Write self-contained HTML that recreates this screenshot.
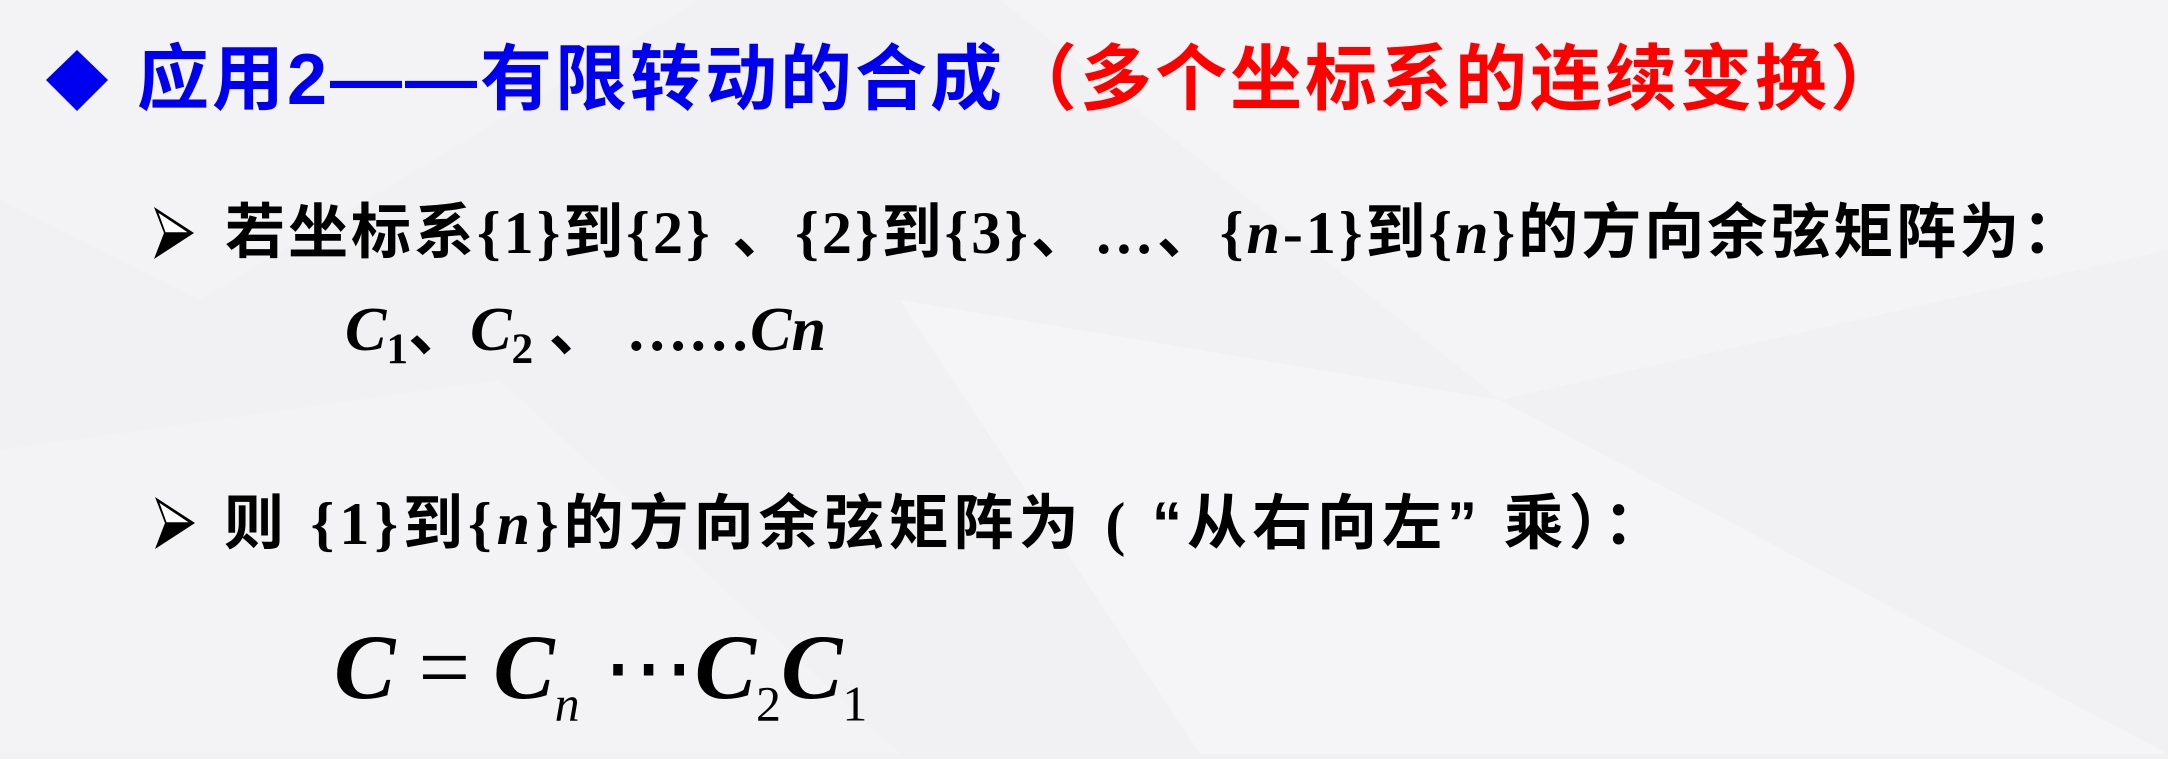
<!DOCTYPE html>
<html><head><meta charset="utf-8">
<style>
html,body{margin:0;padding:0}
body{width:2168px;height:754px;overflow:hidden;position:relative;background:#f1f1f3;font-family:"Liberation Sans","Noto Sans CJK SC",sans-serif}
.bg{position:absolute;left:0;top:0}
.t{position:absolute;white-space:nowrap;font-weight:bold}
.cj{font-family:"Liberation Sans","Noto Sans CJK SC",sans-serif;font-weight:bold}
.se{font-family:"Liberation Serif",serif;font-weight:bold}
sub{font-size:0.7em;vertical-align:-0.3em}
</style></head><body>
<svg class="bg" width="2168" height="754">
<polygon points="0,0 700,0 200,300 0,200" fill="#f3f3f5"/>
<polygon points="1000,0 2168,0 2168,250 1500,400" fill="#f4f4f6"/>
<polygon points="900,300 1500,400 2168,754 1200,754" fill="#f5f5f7"/>
<polygon points="0,450 500,380 900,754 0,754" fill="#f3f3f5"/>
</svg>
<svg style="position:absolute;left:46px;top:50px" width="62" height="61"><polygon points="31,0 62,30 31,61 0,30" fill="#0000f0"/></svg>
<div class="t cj" style="left:137px;top:30px;font-size:72px;line-height:100px;color:#0000ee;letter-spacing:3px">应用2——有限转动的合成<span style="color:#ff0000">（多个坐标系的连续变换）</span></div>

<svg style="position:absolute;left:154px;top:207px" width="40" height="52"><polygon points="0,0 40,26 0,52 10,26" fill="#000"/><polygon points="3,4 36,26 11,26" fill="#fff" stroke="#000" stroke-width="1.5"/></svg>
<div class="t cj" style="left:225px;top:195px;font-size:60px;line-height:76px;color:#000;letter-spacing:3px">若坐标系<span class="se">{1}</span>到<span class="se">{2}</span> 、<span class="se">{2}</span>到<span class="se">{3}</span>、<span class="se">…</span>、<span class="se">{<i>n</i>-1}</span>到<span class="se">{<i>n</i>}</span>的方向余弦矩阵为：</div>
<div class="t" style="left:345px;top:292px;font-size:62px;line-height:76px;font-family:'Liberation Serif','Noto Sans CJK SC',serif;font-weight:bold"><i>C</i><sub>1</sub>、<i>C</i><sub>2</sub> 、 ……<i>Cn</i></div>

<svg style="position:absolute;left:155px;top:497px" width="40" height="52"><polygon points="0,0 40,26 0,52 10,26" fill="#000"/><polygon points="3,4 36,26 11,26" fill="#fff" stroke="#000" stroke-width="1.5"/></svg>
<div class="t cj" style="left:224px;top:486px;font-size:60px;line-height:76px;color:#000;letter-spacing:5px">则 <span class="se">{1}</span>到<span class="se">{<i>n</i>}</span>的方向余弦矩阵为 <span class="se">(</span> “从右向左” 乘）：</div>

<div class="t" style="left:334px;top:612px;font-size:92px;line-height:110px;font-family:'Liberation Serif',serif;font-weight:normal"><b><i>C</i></b> = <b><i>C</i></b><sub style="font-style:italic;font-size:50px;vertical-align:-0.45em">n</sub> ⋯<b><i>C</i></b><sub style="font-size:50px;vertical-align:-0.45em">2</sub><b><i>C</i></b><sub style="font-size:50px;vertical-align:-0.45em">1</sub></div>
</body></html>
